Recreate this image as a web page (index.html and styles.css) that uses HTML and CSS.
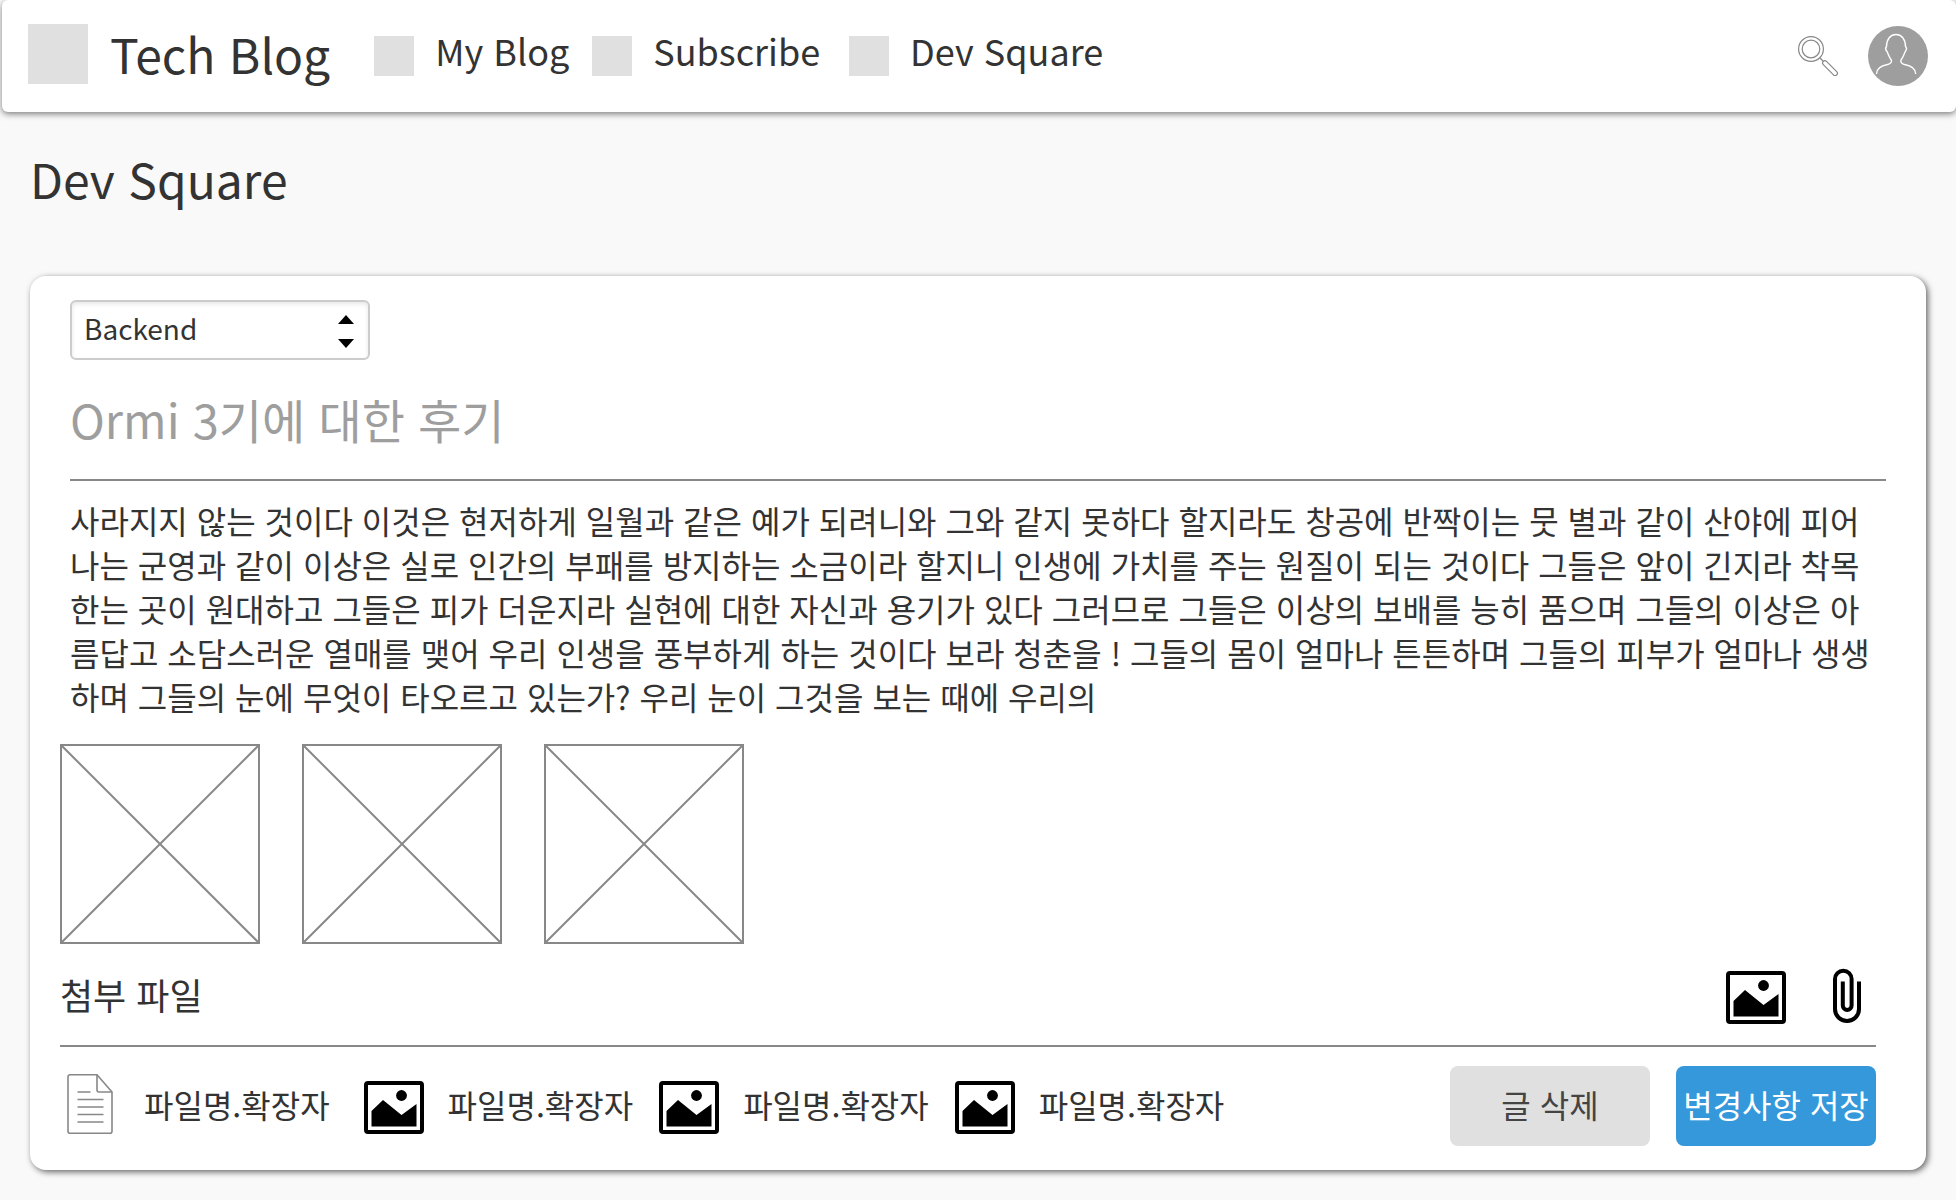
FILE: index.html
```html
<!DOCTYPE html>
<html lang="ko">
<head>
<meta charset="utf-8">
<meta name="viewport" content="width=device-width, initial-scale=1">
<title>Dev Square - Tech Blog</title>
<link rel="stylesheet" href="styles.css">
</head>
<body>
<svg class="sprite" aria-hidden="true">
  <symbol id="icon-image" viewBox="0 0 60 60">
    <rect x="2" y="9" width="56" height="49" rx="2" fill="none" stroke="#000" stroke-width="4"/>
    <path d="M7.500 52.500V37L19 26l18.500 15L52.500 30v22.500z"/>
    <circle cx="37.500" cy="21.500" r="5.400"/>
  </symbol>
</svg>

<header class="topbar">
  <a class="brand" href="#"><span class="brand-mark"></span><span class="brand-name">Tech Blog</span></a>
  <nav class="nav">
    <a class="nav-link" href="#"><span class="nav-mark"></span><span class="nav-text">My Blog</span></a>
    <a class="nav-link" href="#"><span class="nav-mark"></span><span class="nav-text">Subscribe</span></a>
    <a class="nav-link nav-link-last" href="#"><span class="nav-mark"></span><span class="nav-text">Dev Square</span></a>
  </nav>
  <div class="tools">
    <button class="icon-button" type="button" aria-label="검색">
      <svg width="40" height="40" viewBox="0 0 40 40" fill="none" stroke="#888" stroke-width="1.200">
        <circle cx="13" cy="13" r="12.400"/><circle cx="13" cy="13" r="8.800"/>
        <path d="M22 22l3.500 3.500"/>
        <path d="M25.300 28.600a2 2 0 0 1 3.200-3.200l10.200 10.300a2 2 0 0 1-3.200 3.200z"/>
      </svg>
    </button>
    <button class="icon-button" type="button" aria-label="프로필">
      <svg width="60" height="60" viewBox="0 0 60 60">
        <circle cx="30" cy="30" r="30" fill="#9e9e9e"/>
        <path d="M8.500 48C8.500 42 14 39.500 19.500 38.500C23 37.500 24 36 23.300 34C21 31 20.300 28 19 25.500C17.500 24 17.300 22 18.500 20.500C18.500 13 22.500 8.500 28 8.500C33.500 8.500 37.500 13 37.500 20.500C39 22 38.500 24 37.300 25.500C36 28 35.300 31 33 34C32.300 36 33.300 37.500 36.500 38.500C42 39.500 47.700 42 47.700 48" fill="none" stroke="#fff" stroke-width="1.400"/>
      </svg>
    </button>
  </div>
</header>

<main class="page">
  <h1 class="page-title">Dev Square</h1>
  <form class="card">
    <div class="editor">
      <div class="select">
        <select class="select-input" aria-label="카테고리">
          <option>Backend</option>
        </select>
        <svg class="select-arrows" width="16" height="36" viewBox="0 0 16 36" aria-hidden="true"><path d="M0 10L8 1l8 9zM0 25h16l-8 9z"/></svg>
      </div>
      <input class="title-input" type="text" aria-label="제목" placeholder="Ormi 3기에 대한 후기">
      <textarea class="body-input" rows="5" aria-label="본문">사라지지 않는 것이다 이것은 현저하게 일월과 같은 예가 되려니와 그와 같지 못하다 할지라도 창공에 반짝이는 뭇 별과 같이 산야에 피어나는 군영과 같이 이상은 실로 인간의 부패를 방지하는 소금이라 할지니 인생에 가치를 주는 원질이 되는 것이다 그들은 앞이 긴지라 착목한는 곳이 원대하고 그들은 피가 더운지라 실현에 대한 자신과 용기가 있다 그러므로 그들은 이상의 보배를 능히 품으며 그들의 이상은 아름답고 소담스러운 열매를 맺어 우리 인생을 풍부하게 하는 것이다 보라 청춘을 ! 그들의 몸이 얼마나 튼튼하며 그들의 피부가 얼마나 생생하며 그들의 눈에 무엇이 타오르고 있는가? 우리 눈이 그것을 보는 때에 우리의</textarea>
    </div>

    <div class="photos">
      <svg class="photo" viewBox="0 0 200 200"><rect x="1" y="1" width="198" height="198"/><path d="M1 1l198 198M199 1L1 199"/></svg>
      <svg class="photo" viewBox="0 0 200 200"><rect x="1" y="1" width="198" height="198"/><path d="M1 1l198 198M199 1L1 199"/></svg>
      <svg class="photo" viewBox="0 0 200 200"><rect x="1" y="1" width="198" height="198"/><path d="M1 1l198 198M199 1L1 199"/></svg>
    </div>

    <div class="attach-head">
      <h2 class="attach-title">첨부 파일</h2>
      <div class="attach-tools">
        <button class="icon-button" type="button" aria-label="이미지 첨부"><svg width="60" height="60"><use href="#icon-image"/></svg></button>
        <button class="icon-button" type="button" aria-label="파일 첨부">
          <svg width="60" height="60" viewBox="0 0 60 60" fill="none" stroke="#000" stroke-width="4"><path d="M43 17.500V45a12 12 0 0 1-24 0V15a8.300 8.300 0 0 1 16.600 0V41.500a4.400 4.400 0 0 1-8.800 0V17.500"/></svg>
        </button>
      </div>
    </div>

    <div class="card-foot">
      <ul class="files">
        <li class="file file-doc">
          <svg width="60" height="60" viewBox="0 0 60 60" fill="none" stroke="#888" stroke-width="1.600"><path d="M37 .8H10a2 2 0 0 0-2 2v54.400a2 2 0 0 0 2 2h40a2 2 0 0 0 2-2V18z"/><path d="M37 .8V16a2 2 0 0 0 2 2h13M17.500 18h13M17.500 25.500h26M17.500 33h26M17.500 40.500h26M17.500 48h26"/></svg>
          <a class="file-name" href="#">파일명.확장자</a>
        </li>
        <li class="file"><svg width="60" height="60"><use href="#icon-image"/></svg><a class="file-name" href="#">파일명.확장자</a></li>
        <li class="file"><svg width="60" height="60"><use href="#icon-image"/></svg><a class="file-name" href="#">파일명.확장자</a></li>
        <li class="file"><svg width="60" height="60"><use href="#icon-image"/></svg><a class="file-name" href="#">파일명.확장자</a></li>
      </ul>
      <div class="actions">
        <button class="button button-delete" type="button">글 삭제</button>
        <button class="button button-save" type="submit">변경사항 저장</button>
      </div>
    </div>
  </form>
</main>
</body>
</html>
```
FILE: styles.css
```css
* {
  box-sizing: border-box;
}

body {
  margin: 0;
  background: #f9f9f9;
  color: #333;
  font-family: "Noto Sans CJK KR", sans-serif;
  font-size: 32px;
  line-height: 44px;
}

a {
  color: inherit;
  text-decoration: none;
}

button,
input,
select,
textarea {
  font: inherit;
  color: inherit;
}

svg {
  display: block;
  flex: none;
}

.sprite {
  position: absolute;
  width: 0;
  height: 0;
}

.topbar {
  display: flex;
  align-items: center;
  height: 112px;
  margin-left: 2px;
  padding: 0 28px 0 26px;
  background: #fff;
  border-radius: 6px;
  box-shadow: 0 2px 6px rgba(0, 0, 0, 0.5);
}

.brand,
.nav,
.nav-link,
.tools {
  display: flex;
  align-items: center;
}

.brand {
  gap: 22px;
  margin-right: 44px;
}

.brand-mark {
  width: 60px;
  height: 60px;
  margin-bottom: 4px;
  background: #e0e0e0;
}

.brand-name {
  padding-bottom: 6px;
  font-size: 48px;
  line-height: 64px;
}

.nav {
  gap: 23px;
}

.nav-link {
  gap: 21px;
}

.nav-link-last {
  margin-left: 6px;
}

.nav-mark {
  width: 40px;
  height: 40px;
  background: #e0e0e0;
}

.nav-text {
  padding-bottom: 12px;
  font-size: 36px;
}

.tools {
  gap: 30px;
  margin-left: auto;
}

.icon-button {
  padding: 0;
  border: 0;
  background: none;
}

.page {
  padding: 34px 30px 30px;
}

.page-title {
  margin: 0 0 66px;
  font-size: 48px;
  font-weight: 400;
  line-height: 64px;
}

.card {
  padding: 24px 50px 24px 30px;
  background: #fff;
  border-radius: 16px;
  box-shadow: 2px 2px 6px rgba(0, 0, 0, 0.6);
}

.editor {
  display: flex;
  flex-direction: column;
  margin: 0 -10px 26px 10px;
}

.select {
  position: relative;
  width: 300px;
}

.select-input {
  display: block;
  width: 100%;
  height: 60px;
  padding: 0 12px 4px;
  border: 2px solid #ccc;
  border-radius: 6px;
  background: #fff;
  box-shadow: inset 0 2px 4px rgba(0, 0, 0, 0.1);
  font-size: 28px;
  appearance: none;
}

.select-arrows {
  position: absolute;
  top: 14px;
  right: 16px;
  pointer-events: none;
}

.title-input {
  height: 121px;
  margin-bottom: 17px;
  padding: 0 0 2px;
  border: 0;
  border-bottom: 2px solid #888;
  background: none;
  font-size: 47px;
}

.title-input::placeholder {
  color: #9e9e9e;
  opacity: 1;
}

.body-input {
  display: block;
  width: 100%;
  padding: 0;
  border: 0;
  background: none;
  line-height: 44px;
  resize: none;
  overflow: hidden;
}

.photos {
  display: flex;
  gap: 42px;
}

.photo {
  width: 200px;
  height: 200px;
  fill: none;
  stroke: #888;
  stroke-width: 2;
}

.attach-head {
  display: flex;
  align-items: center;
  justify-content: space-between;
  height: 103px;
  margin-bottom: 19px;
  padding-bottom: 2px;
  border-bottom: 2px solid #888;
}

.attach-title {
  margin: 0;
  font-size: 36px;
  font-weight: 400;
}

.attach-tools {
  display: flex;
  gap: 30px;
}

.card-foot {
  display: flex;
  justify-content: space-between;
}

.files {
  display: flex;
  gap: 26px;
  margin: 0;
  padding: 0 0 4px;
  list-style: none;
}

.file {
  display: flex;
  align-items: center;
  gap: 24px;
}

.file-doc {
  margin-right: 8px;
}

.actions {
  display: flex;
  gap: 26px;
}

.button {
  width: 200px;
  height: 80px;
  padding: 0 0 4px;
  border: 0;
  border-radius: 8px;
  white-space: nowrap;
}

.button-delete {
  background: #e0e0e0;
  color: #444;
}

.button-save {
  background: #3498db;
  color: #fff;
}
```
